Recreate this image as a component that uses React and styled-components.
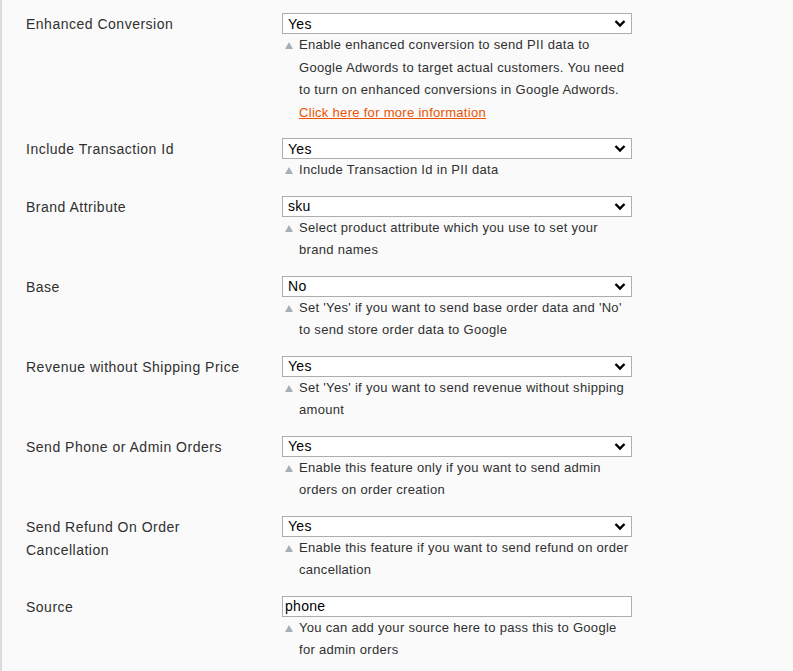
import React from 'react'
import styled, { createGlobalStyle } from 'styled-components'

const GlobalStyle = createGlobalStyle`
  html, body {
    margin: 0;
    padding: 0;
    background: #fafafa;
  }
  body {
    font-family: 'Liberation Sans', Arial, Helvetica, sans-serif;
    color: #303030;
  }
`

const Page = styled.div`
  min-height: 671px;
  border-left: 2px solid #dcdcdc;
  box-sizing: border-box;
  padding: 13px 0 0 24px;
`

const Row = styled.div`
  display: grid;
  grid-template-columns: 256px 350px;
  padding-bottom: 14px;
`

const Label = styled.div`
  font-size: 14px;
  letter-spacing: 0.5px;
  line-height: 23px;
  padding-right: 40px;
`

const Control = styled.div`
  display: flex;
  flex-direction: column;
`

const SelectWrap = styled.div`
  position: relative;
  height: 21px;
`

const Select = styled.select`
  appearance: none;
  -webkit-appearance: none;
  width: 100%;
  height: 21px;
  box-sizing: border-box;
  border: 1px solid #adadad;
  border-radius: 0;
  background: #fff;
  font-family: 'Liberation Sans', Arial, sans-serif;
  font-size: 14px;
  letter-spacing: 0.3px;
  color: #000;
  padding: 0 0 0 5px;
  margin: 0;
  outline: none;
`

const Chevron = styled.svg`
  position: absolute;
  right: 6px;
  top: 6px;
  width: 12px;
  height: 9px;
  pointer-events: none;
`

const TextInput = styled.input`
  width: 100%;
  height: 21px;
  box-sizing: border-box;
  border: 1px solid #adadad;
  background: #fff;
  font-family: 'Liberation Sans', Arial, sans-serif;
  font-size: 14px;
  letter-spacing: 0.3px;
  color: #000;
  padding: 0 0 0 2px;
  margin: 0;
  outline: none;
`

const Note = styled.div`
  position: relative;
  font-size: 13px;
  letter-spacing: 0.3px;
  line-height: 22.5px;
  padding-left: 17px;
  color: #303030;

  &::before {
    content: '';
    position: absolute;
    left: 3px;
    top: 8px;
    border-left: 4px solid transparent;
    border-right: 4px solid transparent;
    border-bottom: 7px solid #a4b0b6;
  }
`

const Link = styled.a`
  color: #eb5202;
  text-decoration: underline;
  cursor: pointer;
`

const fields = [
  {
    label: 'Enhanced Conversion',
    value: 'Yes',
    note: (
      <>
        Enable enhanced conversion to send PII data to Google Adwords to target actual customers. You need
        to turn on enhanced conversions in Google Adwords.
        <br />
        <Link href="#">Click here for more information</Link>
      </>
    )
  },
  { label: 'Include Transaction Id', value: 'Yes', note: 'Include Transaction Id in PII data' },
  { label: 'Brand Attribute', value: 'sku', note: 'Select product attribute which you use to set your brand names' },
  {
    label: 'Base',
    value: 'No',
    note: "Set 'Yes' if you want to send base order data and 'No' to send store order data to Google"
  },
  {
    label: 'Revenue without Shipping Price',
    value: 'Yes',
    note: "Set 'Yes' if you want to send revenue without shipping amount"
  },
  {
    label: 'Send Phone or Admin Orders',
    value: 'Yes',
    note: 'Enable this feature only if you want to send admin orders on order creation'
  },
  {
    label: 'Send Refund On Order Cancellation',
    value: 'Yes',
    note: 'Enable this feature if you want to send refund on order cancellation'
  },
  {
    label: 'Source',
    input: 'phone',
    note: 'You can add your source here to pass this to Google for admin orders'
  }
]

const Dropdown = ({ value }) => (
  <SelectWrap>
    <Select defaultValue={value}>
      <option>{value}</option>
      {value !== 'No' && value !== 'sku' && <option>No</option>}
      {value === 'No' && <option>Yes</option>}
    </Select>
    <Chevron viewBox="0 0 12 9">
      <path d="M1.5 2 L6 6.5 L10.5 2" fill="none" stroke="#000" strokeWidth="2.4" />
    </Chevron>
  </SelectWrap>
)

const App = () => (
  <>
    <GlobalStyle />
    <Page>
      {fields.map((f) => (
        <Row key={f.label}>
          <Label>{f.label}</Label>
          <Control>
            {f.input ? <TextInput defaultValue={f.input} /> : <Dropdown value={f.value} />}
            <Note>{f.note}</Note>
          </Control>
        </Row>
      ))}
    </Page>
  </>
)

export default App
